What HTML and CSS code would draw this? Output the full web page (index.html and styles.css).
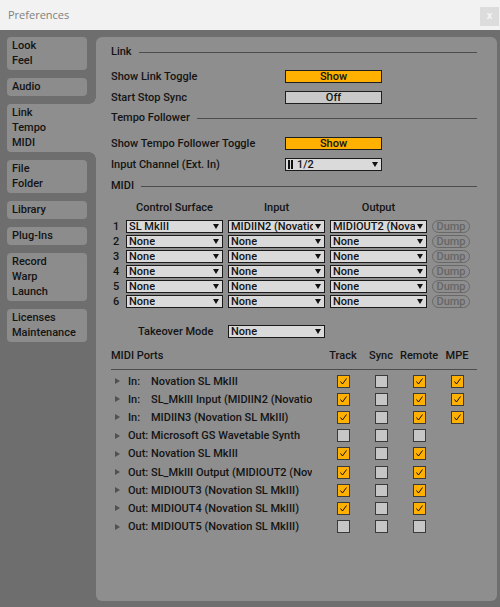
FILE: index.html
```html
<!DOCTYPE html>
<html lang="en">
<head>
    <meta charset="UTF-8">
    <title>Preferences</title>
    <link rel="stylesheet" href="styles.css">
</head>
<body>
<div class="window">
    <div class="titlebar">
        <span class="title">Preferences</span>
        <span class="close">x</span>
    </div>
    <div class="content">
        <nav class="tabs">
            <div class="tab">Look<br>Feel</div>
            <div class="tab">Audio</div>
            <div class="tab active">Link<br>Tempo<br>MIDI</div>
            <div class="tab">File<br>Folder</div>
            <div class="tab">Library</div>
            <div class="tab">Plug-Ins</div>
            <div class="tab">Record<br>Warp<br>Launch</div>
            <div class="tab">Licenses<br>Maintenance</div>
        </nav>

        <main class="panel">
            <!-- Link -->
            <div class="section-head"><span>Link</span></div>
            <div class="row first">
                <span class="label">Show Link Toggle</span>
                <span class="toggle on">Show</span>
            </div>
            <div class="row">
                <span class="label">Start Stop Sync</span>
                <span class="toggle">Off</span>
            </div>

            <!-- Tempo Follower -->
            <div class="section-head tempo"><span>Tempo Follower</span></div>
            <div class="row after-tempo">
                <span class="label">Show Tempo Follower Toggle</span>
                <span class="toggle on">Show</span>
            </div>
            <div class="row">
                <span class="label">Input Channel (Ext. In)</span>
                <span class="select wide"><span class="bars"><i></i><i></i></span>1/2</span>
            </div>

            <!-- MIDI control surfaces -->
            <div class="section-head midi"><span>MIDI</span></div>
            <div class="surface-grid heads">
                <span></span>
                <span class="col-head">Control Surface</span>
                <span class="col-head">Input</span>
                <span class="col-head">Output</span>
                <span></span>
            </div>
            <div class="surface-grid rows" id="surfaces"></div>

            <div class="takeover">
                <span class="takeover-label">Takeover Mode</span>
                <span class="select">None</span>
            </div>

            <!-- MIDI ports -->
            <div class="ports-grid ports-head">
                <span class="ports-title">MIDI Ports</span>
                <span class="col-head">Track</span>
                <span class="col-head">Sync</span>
                <span class="col-head">Remote</span>
                <span class="col-head">MPE</span>
            </div>
            <div id="ports"></div>
        </main>
    </div>
</div>

<script>
    // control surface slots: surface, input, output
    const surfaces = [
        ['SL MkIII', 'MIDIIN2 (Novation SL MkIII)', 'MIDIOUT2 (Novation SL MkIII)'],
        ['None', 'None', 'None'],
        ['None', 'None', 'None'],
        ['None', 'None', 'None'],
        ['None', 'None', 'None'],
        ['None', 'None', 'None']
    ];

    const grid = document.getElementById('surfaces');
    surfaces.forEach((slot, i) => {
        const num = document.createElement('span');
        num.className = 'slot-num';
        num.textContent = i + 1;
        grid.appendChild(num);
        slot.forEach(value => {
            const sel = document.createElement('span');
            sel.className = 'select';
            sel.innerHTML = '<span class="select-text"></span>';
            sel.firstChild.textContent = value;
            grid.appendChild(sel);
        });
        const dump = document.createElement('span');
        dump.className = 'dump';
        dump.textContent = 'Dump';
        grid.appendChild(dump);
    });

    // ports: direction, name, track, sync, remote, mpe (null = no box)
    const ports = [
        ['In:', 'Novation SL MkIII', 1, 0, 1, 1],
        ['In:', 'SL_MkIII Input (MIDIIN2 (Novation SL MkIII))', 1, 0, 1, 1],
        ['In:', 'MIDIIN3 (Novation SL MkIII)', 1, 0, 1, 1],
        ['Out:', 'Microsoft GS Wavetable Synth', 0, 0, 0, null],
        ['Out:', 'Novation SL MkIII', 1, 0, 1, null],
        ['Out:', 'SL_MkIII Output (MIDIOUT2 (Novation SL MkIII))', 1, 0, 1, null],
        ['Out:', 'MIDIOUT3 (Novation SL MkIII)', 1, 0, 1, null],
        ['Out:', 'MIDIOUT4 (Novation SL MkIII)', 1, 0, 1, null],
        ['Out:', 'MIDIOUT5 (Novation SL MkIII)', 0, 0, 0, null]
    ];

    const check = '<svg viewBox="0 0 11 11" width="11" height="11"><polyline points="2.5,5.5 4.5,8 8.5,2.5" fill="none" stroke="#111" stroke-width="1"/></svg>';

    const list = document.getElementById('ports');
    ports.forEach(p => {
        const row = document.createElement('div');
        row.className = 'ports-grid port';
        let html = '<span class="arrow"></span>' +
            '<span class="port-name"><span class="dir"></span><span class="name"></span></span>';
        p.slice(2).forEach(v => {
            if (v === null) {
                html += '<span></span>';
            } else {
                html += '<span class="cell"><span class="box' + (v ? ' checked">' + check : '">') + '</span></span>';
            }
        });
        row.innerHTML = html;
        row.querySelector('.dir').textContent = p[0];
        row.querySelector('.name').textContent = p[1];
        list.appendChild(row);
    });
</script>
</body>
</html>
```

FILE: styles.css
```css
body {
    margin: 0;
    font-family: Roboto, "Liberation Sans", sans-serif;
    font-size: 11px;
    font-weight: 500;
    color: #141414;
}
.window {
    width: 500px;
    height: 607px;
    display: flex;
    flex-direction: column;
}
.titlebar {
    height: 30px;
    background: #f2f2f2;
    display: flex;
    align-items: flex-start;
    justify-content: space-between;
}
.title {
    font-family: "Open Sans", "Noto Sans", sans-serif;
    font-weight: 400;
    font-size: 11px;
    color: #808080;
    margin: 7px 0 0 8px;
}
.close {
    width: 19px;
    height: 19px;
    margin: 7px 1px 0 0;
    background: #dcdcdc;
    color: #f7f7f7;
    font-family: "Liberation Sans", sans-serif;
    font-size: 10px;
    font-weight: 700;
    line-height: 18px;
    text-align: center;
}
.content {
    flex: 1;
    display: flex;
    background: #6e6e6e;
    padding: 7px 3px 6px 7px;
}

/* sidebar tabs */
.tabs {
    width: 80px;
    display: flex;
    flex-direction: column;
    gap: 8px;
}
.tab {
    background: #8c8c8c;
    border-radius: 4px;
    padding: 1px 5px 2px;
    line-height: 15px;
}
.tab.active {
    position: relative;
    margin-right: -9px;
    border-radius: 4px 0 0 4px;
    background: #8e8e8e;
}
.tab.active::before,
.tab.active::after {
    content: "";
    position: absolute;
    right: 0;
    width: 7px;
    height: 7px;
}
.tab.active::before {
    top: -7px;
    background: radial-gradient(circle at 0 0, transparent 6.5px, #8e8e8e 7px);
}
.tab.active::after {
    bottom: -7px;
    background: radial-gradient(circle at 0 100%, transparent 6.5px, #8e8e8e 7px);
}

/* main panel */
.panel {
    flex: 1;
    margin-left: 9px;
    background: #8e8e8e;
    border-radius: 6px;
    padding: 8px 20px 0 15px;
}
.section-head {
    height: 14px;
    line-height: 14px;
    display: flex;
    align-items: center;
    gap: 7px;
}
.section-head::after {
    content: "";
    flex: 1;
    height: 1px;
    background: #4c4c4c;
}
.section-head.tempo {
    margin-top: 3px;
}
.section-head.midi {
    margin-top: 4px;
}
.row {
    height: 21px;
    display: flex;
    align-items: center;
}
.row.first {
    margin-top: 7px;
}
.row.after-tempo {
    margin-top: 8px;
}
.label {
    width: 174px;
}
.toggle {
    width: 95px;
    height: 11px;
    line-height: 11px;
    border: 1px solid #1e1e1e;
    background: #c9c9c9;
    text-align: center;
}
.toggle.on {
    background: #ffb000;
}

/* dropdowns */
.select {
    position: relative;
    box-sizing: border-box;
    height: 13px;
    line-height: 11px;
    border: 1px solid #1a1a1a;
    background: #dadada;
    padding: 0 11px 0 2px;
    white-space: nowrap;
    overflow: hidden;
    display: flex;
    align-items: center;
}
.select::after {
    content: "";
    position: absolute;
    right: 3px;
    top: 3px;
    border-left: 3.5px solid transparent;
    border-right: 3.5px solid transparent;
    border-top: 5px solid #111;
}
.select-text {
    overflow: hidden;
}
.select.wide {
    width: 97px;
}
.bars {
    display: flex;
    gap: 1px;
    margin-right: 4px;
}
.bars i {
    width: 2px;
    height: 9px;
    background: #111;
}

/* control surface table */
.surface-grid {
    display: grid;
    grid-template-columns: 10px 97px 97px 97px 38px;
    column-gap: 5px;
    align-items: center;
}
.surface-grid.heads {
    margin-top: 8px;
    height: 14px;
    line-height: 14px;
}
.surface-grid.rows {
    margin-top: 4px;
    grid-auto-rows: 15px;
}
.col-head {
    text-align: center;
}
.slot-num {
    padding-left: 2px;
}
.dump {
    box-sizing: border-box;
    height: 13px;
    line-height: 11px;
    border: 1px solid #686868;
    border-radius: 7px;
    color: #666;
    text-align: center;
}
.takeover {
    margin-top: 15px;
    height: 14px;
    display: flex;
    align-items: center;
    padding-left: 27px;
}
.takeover-label {
    width: 90px;
}
.takeover .select {
    width: 97px;
}

/* MIDI ports list */
.ports-grid {
    display: grid;
    grid-template-columns: 213px 38px 38px 38px 38px;
    align-items: center;
}
.ports-head {
    margin-top: 11px;
    height: 14px;
    line-height: 14px;
    padding-bottom: 6px;
    border-bottom: 1px solid #4c4c4c;
    margin-bottom: 2px;
}
.port {
    height: 18.2px;
    grid-template-columns: 17px 196px 38px 38px 38px 38px;
}
.arrow {
    width: 0;
    height: 0;
    margin-left: 4px;
    border-top: 3.5px solid transparent;
    border-bottom: 3.5px solid transparent;
    border-left: 5px solid #505050;
}
.port-name {
    width: 184px;
    white-space: nowrap;
    overflow: hidden;
}
.dir {
    display: inline-block;
    min-width: 22px;
    margin-right: 1px;
}
.cell {
    display: flex;
    justify-content: center;
}
.box {
    box-sizing: border-box;
    width: 13px;
    height: 13px;
    border: 1px solid #3a3a3a;
    background: #c6c6c6;
    display: flex;
}
.box.checked {
    background: #ffb000;
}
```
